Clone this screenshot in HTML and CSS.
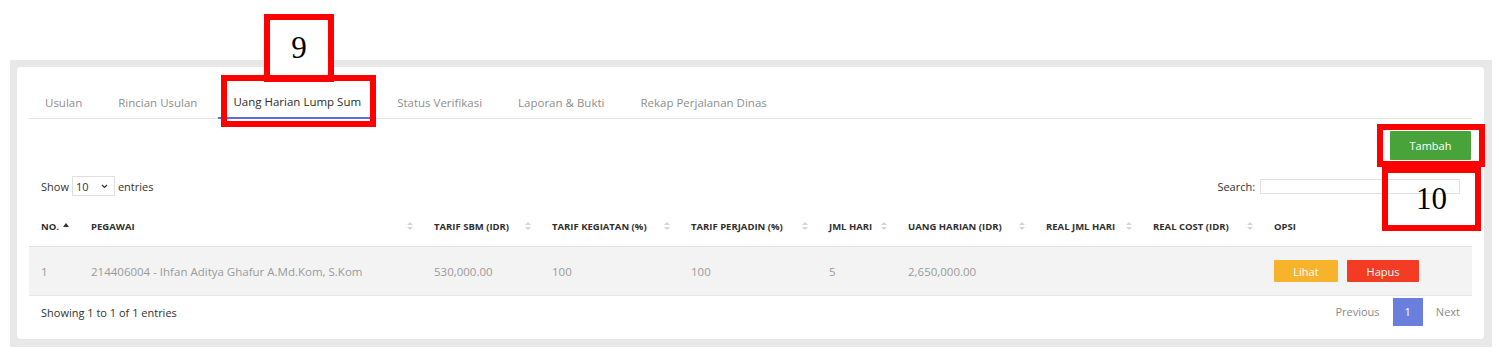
FILE: index.html
```html
<!DOCTYPE html>
<html lang="id">
<head>
    <meta charset="UTF-8">
    <meta name="viewport" content="width=device-width, initial-scale=1.0">
    <title>Uang Harian Lump Sum</title>
    <link rel="stylesheet" href="styles.css">
</head>
<body>
    <div class="panel">
        <div class="card">
            <ul class="tabs">
                <li><a href="#">Usulan</a></li>
                <li><a href="#">Rincian Usulan</a></li>
                <li><a href="#" class="active">Uang Harian Lump Sum</a></li>
                <li><a href="#">Status Verifikasi</a></li>
                <li><a href="#">Laporan &amp; Bukti</a></li>
                <li><a href="#">Rekap Perjalanan Dinas</a></li>
            </ul>

            <div class="toolbar">
                <button class="btn btn-green">Tambah</button>
            </div>

            <div class="dt-controls">
                <label class="dt-length">Show
                    <span class="select-wrap">
                        <select>
                            <option>10</option>
                            <option>25</option>
                            <option>50</option>
                        </select>
                        <svg class="chevron" width="7" height="5" viewBox="0 0 7 5"><path d="M1 1l2.5 2.5L6 1" fill="none" stroke="#333" stroke-width="1.2"/></svg>
                    </span>
                    entries</label>
                <label class="dt-search">Search: <input type="search"></label>
            </div>

            <table class="dt">
                <colgroup>
                    <col style="width:50px">
                    <col style="width:343px">
                    <col style="width:118px">
                    <col style="width:139px">
                    <col style="width:138px">
                    <col style="width:79px">
                    <col style="width:138px">
                    <col style="width:107px">
                    <col style="width:121px">
                    <col style="width:210px">
                </colgroup>
                <thead>
                    <tr>
                        <th class="sorted">No.</th>
                        <th class="sorting">Pegawai</th>
                        <th class="sorting">Tarif SBM (IDR)</th>
                        <th class="sorting">Tarif Kegiatan (%)</th>
                        <th class="sorting">Tarif Perjadin (%)</th>
                        <th class="sorting">Jml Hari</th>
                        <th class="sorting">Uang Harian (IDR)</th>
                        <th class="sorting">Real Jml Hari</th>
                        <th class="sorting">Real Cost (IDR)</th>
                        <th>Opsi</th>
                    </tr>
                </thead>
                <tbody>
                    <tr>
                        <td>1</td>
                        <td>214406004 - Ihfan Aditya Ghafur A.Md.Kom, S.Kom</td>
                        <td>530,000.00</td>
                        <td>100</td>
                        <td>100</td>
                        <td>5</td>
                        <td>2,650,000.00</td>
                        <td></td>
                        <td></td>
                        <td>
                            <button class="btn btn-sm btn-yellow">Lihat</button>
                            <button class="btn btn-sm btn-red">Hapus</button>
                        </td>
                    </tr>
                </tbody>
            </table>

            <div class="dt-footer">
                <div class="dt-info">Showing 1 to 1 of 1 entries</div>
                <div class="pager">
                    <a href="#">Previous</a>
                    <a href="#" class="current">1</a>
                    <a href="#">Next</a>
                </div>
            </div>
        </div>
    </div>

    <!-- annotation marks -->
    <div class="mark mark-num mark-9">9</div>
    <div class="mark mark-tab"></div>
    <div class="mark mark-add"></div>
    <div class="mark mark-num mark-10">10</div>
</body>
</html>
```

FILE: styles.css
```css
body {
    margin: 0;
    padding: 60px 7px 0 10px;
    font-family: "Open Sans", Arial, sans-serif;
    background: #fff;
    color: #333;
}
.panel {
    background: #e8e8e8;
    padding: 7px 8px 8px 7px;
}
.card {
    background: #fff;
    border-radius: 4px;
    padding: 20px 12px 13px 12px;
}

/* tabs */
.tabs {
    list-style: none;
    margin: 0;
    padding: 0;
    display: flex;
    border-bottom: 1px solid #e4e4e4;
}
.tabs a {
    display: block;
    padding: 0 18px;
    height: 31px;
    line-height: 31px;
    font-size: 11.5px;
    color: #8e8e8e;
    text-decoration: none;
}
.tabs li:first-child a {
    padding-left: 16px;
}
.tabs a.active {
    color: #2b2b2b;
    border-bottom: 2px solid #5b6fd8;
    height: 30px;
    line-height: 30px;
    margin: 0 8px -1px 3px;
    padding: 0 10px 0 15px;
}

/* buttons */
.btn {
    border: none;
    color: #fff;
    font-family: inherit;
    font-size: 11px;
    cursor: pointer;
    border-radius: 1px;
}
.btn-green {
    background: #48a43a;
    width: 81px;
    height: 29px;
}
.btn-sm {
    height: 22px;
    padding: 0;
}
.btn-yellow {
    background: #f7b32c;
    width: 64px;
}
.btn-red {
    background: #f43b24;
    width: 72px;
    margin-left: 6px;
}
.toolbar {
    display: flex;
    justify-content: flex-end;
    padding: 12px 1px 0 0;
}

/* datatable controls */
.dt-controls {
    display: flex;
    justify-content: space-between;
    align-items: center;
    padding: 16px 12px 0 12px;
    font-size: 11px;
    color: #333;
}
.dt-length {
    display: inline-flex;
    align-items: center;
    gap: 3px;
}
.select-wrap {
    position: relative;
    display: block;
}
.dt-length select {
    display: block;
    appearance: none;
    -webkit-appearance: none;
    width: 43px;
    height: 20px;
    padding: 0 0 0 3px;
    font-family: inherit;
    font-size: 11px;
    color: #333;
    border: 1px solid #e0e0e0;
    border-radius: 0;
    background: #fff;
}
.chevron {
    position: absolute;
    right: 7px;
    top: 8px;
    pointer-events: none;
}
.dt-search input {
    width: 200px;
    height: 15px;
    border: 1px solid #e0e0e0;
    margin-left: 2px;
}

/* table */
.dt {
    width: 100%;
    table-layout: fixed;
    border-collapse: collapse;
    margin-top: 10px;
}
.dt th {
    position: relative;
    text-align: left;
    font-size: 9.5px;
    font-weight: 700;
    text-transform: uppercase;
    color: #2f2f2f;
    height: 40px;
    padding: 0 12px;
    border-bottom: 1px solid #e2e2e2;
    white-space: nowrap;
}
.dt th.sorting::before,
.dt th.sorting::after,
.dt th.sorted::after {
    content: "";
    position: absolute;
    right: 9px;
    border-left: 3.5px solid transparent;
    border-right: 3.5px solid transparent;
}
.dt th.sorting::before {
    top: 16px;
    border-bottom: 3.5px solid #d6d6d6;
}
.dt th.sorting::after {
    top: 21px;
    border-top: 3.5px solid #d6d6d6;
}
.dt th.sorted::after {
    position: absolute;
    top: 17px;
    left: 34px;
    right: auto;
    border-bottom: 4px solid #333;
}
.dt td {
    background: #f3f3f3;
    font-size: 11.5px;
    color: #9a9a9a;
    height: 48px;
    padding: 0 12px;
    border-bottom: 1px solid #e6e6e6;
    white-space: nowrap;
}

/* footer */
.dt-footer {
    display: flex;
    justify-content: space-between;
    align-items: center;
    margin-top: 2px;
    padding-left: 12px;
    font-size: 11px;
}
.pager {
    display: flex;
}
.pager a {
    display: block;
    height: 28px;
    line-height: 28px;
    padding: 0 12px;
    color: #8a8a8a;
    text-decoration: none;
}
.pager a.current {
    background: #6a7fdc;
    color: #fff;
    margin: 0 1px;
}

/* annotation marks */
.mark {
    position: absolute;
    box-sizing: border-box;
    border: 6px solid #ff0000;
}
.mark-num {
    font-family: "Liberation Serif", "DejaVu Serif", serif;
    font-size: 31px;
    color: #000;
    display: flex;
    align-items: center;
    justify-content: center;
}
.mark-9 {
    left: 264px;
    top: 14px;
    width: 70px;
    height: 68px;
    background: #fff;
}
.mark-tab {
    left: 221px;
    top: 75px;
    width: 155px;
    height: 52px;
}
.mark-add {
    left: 1377px;
    top: 124px;
    width: 108px;
    height: 43px;
}
.mark-10 {
    left: 1382px;
    top: 167px;
    width: 99px;
    height: 64px;
}
```
